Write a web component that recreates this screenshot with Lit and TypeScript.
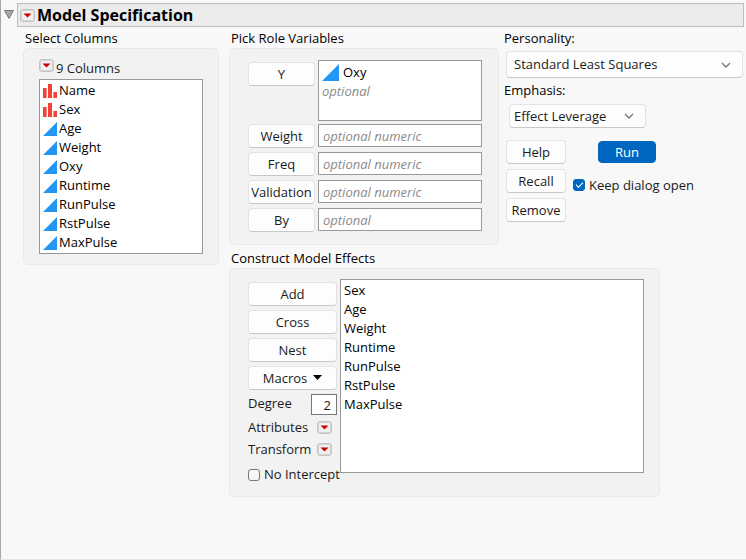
import { LitElement, html, css, svg } from "lit";
import { customElement, property } from "lit/decorators.js";

type Column = { name: string; kind: "nominal" | "continuous" };

const columns: Column[] = [
  { name: "Name", kind: "nominal" },
  { name: "Sex", kind: "nominal" },
  { name: "Age", kind: "continuous" },
  { name: "Weight", kind: "continuous" },
  { name: "Oxy", kind: "continuous" },
  { name: "Runtime", kind: "continuous" },
  { name: "RunPulse", kind: "continuous" },
  { name: "RstPulse", kind: "continuous" },
  { name: "MaxPulse", kind: "continuous" },
];

const roles = [
  { name: "Weight", hint: "optional numeric" },
  { name: "Freq", hint: "optional numeric" },
  { name: "Validation", hint: "optional numeric" },
  { name: "By", hint: "optional" },
];

const effects = ["Sex", "Age", "Weight", "Runtime", "RunPulse", "RstPulse", "MaxPulse"];

/* Modeling-type marker: red bars for nominal, blue ramp for continuous. */
@customElement("type-icon")
class TypeIcon extends LitElement {
  @property() kind: Column["kind"] = "continuous";

  static styles = css`
    :host { display: block; width: 14px; height: 14px; flex: none; }
    .glyph { display: block; width: 100%; height: 100%; }
  `;

  render() {
    const shape = this.kind === "nominal"
      ? svg`<g fill="#f44336"><rect x="0" y="4" width="3.6" height="10"/><rect x="5" y="0" width="4" height="14"/><rect x="10.4" y="8" width="3.6" height="6"/></g>`
      : svg`<path fill="#2196f3" d="M14 0V14H0Z"/>`;
    return html`<svg class="glyph" viewBox="0 0 14 14" aria-hidden="true">${shape}</svg>`;
  }
}

/* The red-triangle menu button. */
@customElement("hotspot-button")
class HotspotButton extends LitElement {
  @property() label = "";

  static styles = css`
    :host { display: block; width: 15px; height: 13px; flex: none; }
    .hotspot {
      display: flex; align-items: center; justify-content: center;
      box-sizing: border-box; width: 100%; height: 100%; padding: 0;
      border: 1px solid #c4c4c4; border-radius: 3px; background: #f0f0f0;
      box-shadow: inset 0 0 0 1px #d4d4d4;
    }
    .mark { display: block; width: 9px; height: 5px; }
  `;

  render() {
    return html`<button class="hotspot" aria-label=${this.label}>
      <svg class="mark" viewBox="0 0 9 5"><path fill="#cc0000" d="M0.5 0.5H8.5L4.5 4.5Z"/></svg>
    </button>`;
  }
}

@customElement("app-root")
class AppRoot extends LitElement {
  static styles = css`
    :host {
      display: block; box-sizing: border-box; min-height: 100vh;
      border-left: 1px solid #a8a8a8; border-bottom: 1px solid #e5e5e5;
      background: #f8f8f8; color: #1a1a1a;
      font: 13px/19px "Open Sans", "Noto Sans", sans-serif;
    }
    button, input, select { font: inherit; color: inherit; margin: 0; box-sizing: border-box; }
    h1, h2, ul { margin: 0; padding: 0; }
    ul { list-style: none; }

    .outline { display: flex; align-items: center; gap: 3px; padding: 3px 2px 0 3px; }
    .disclose { display: block; padding: 0; border: 0; background: none; width: 10px; height: 10px; flex: none; }
    .disclose svg { display: block; }
    .bar {
      flex: 1; display: flex; align-items: center; gap: 2px; box-sizing: border-box;
      height: 24px; padding: 0 2px; border: 1px solid #bdbdbd; background: #ebebeb;
    }
    h1 { font-size: 16px; line-height: 22px; font-weight: 700; color: #000; }
    h2 { font-size: 13px; line-height: 20px; font-weight: 400; padding-left: 2px; white-space: nowrap; color: #000; }

    .body {
      display: grid; grid-template-columns: max-content max-content minmax(0, 1fr);
      column-gap: 10px; row-gap: 3px; align-items: start; padding: 1px 3px 0 22px;
    }
    .select { grid-row: span 2; }
    .construct { grid-column: 2 / span 2; justify-self: start; }
    .panel { border: 1px solid #e9e9e9; border-radius: 5px; background: #f2f2f2; }

    .list { box-sizing: border-box; border: 1px solid #999; background: #fff; color: #000; }
    .columns { padding: 10px 15px; }
    .count { display: flex; gap: 2px; height: 20px; }
    .columns .list { width: 164px; padding: 1px 3px; }
    .columns li { display: flex; align-items: center; gap: 2px; }

    .push {
      height: 24px; padding: 0; border: 1px solid #e3e3e3; border-bottom-color: #c8c8c8;
      border-radius: 4px; background: #fdfdfd; line-height: 22px; text-align: center; white-space: nowrap;
    }
    .roles { display: grid; gap: 3px; padding: 11px 16px 13px 18px; }
    .optional { display: grid; gap: 5px; }
    .role { display: grid; grid-template-columns: 67px 164px; gap: 3px; align-items: start; height: 23px; }
    .role.y { height: 61px; }
    .role.y .push { margin-top: 2px; }
    .response { height: 61px; padding: 2px 3px; }
    .response li { display: flex; align-items: center; gap: 4px; }
    .response type-icon { width: 17px; height: 17px; }
    .hint { display: block; width: 100%; height: 19px; padding: 0; border: 0; outline: 0; background: none; }
    .field { width: 100%; height: 23px; padding: 0 4px; border: 1px solid #999; background: #fff; }
    ::placeholder { color: #8a8a8a; font-style: italic; opacity: 1; }

    .effects { display: flex; align-items: flex-start; gap: 3px; padding: 10px 15px 12px 18px; }
    .tools { display: flex; flex-direction: column; gap: 4px; width: 89px; padding-top: 3px; }
    .effects .list { width: 304px; padding: 1px 3px; min-height: 194px; }
    .caret { display: inline-block; width: 9px; height: 5px; margin-left: 6px; vertical-align: 3px; }
    .options { display: grid; padding-bottom: 1px; }
    .option { display: flex; justify-content: space-between; align-items: center; height: 22px; }
    .option:first-child { align-items: flex-start; }
    .option.menu { padding-right: 5px; }
    .degree { width: 26px; height: 21px; padding: 0 5px; border: 1px solid #777; background: #fff; text-align: right; }

    .check { display: flex; align-items: center; gap: 4px; white-space: nowrap; }
    .box {
      appearance: none; display: grid; place-items: center; flex: none;
      width: 12px; height: 12px; border: 1px solid #777; border-radius: 3px; background: #f7f7f7;
    }
    .box:checked { border-color: #0067c0; background: #0067c0; }
    .box:checked::before {
      content: ""; width: 7px; height: 4px; margin-bottom: 2px; rotate: -45deg;
      border: solid #fff; border-width: 0 0 1px 1px; box-sizing: border-box;
    }

    .side { display: flex; flex-direction: column; margin-left: -5px; }
    .label { line-height: 20px; color: #000; }
    .drop { display: grid; align-items: center; margin-left: 2px; }
    .drop > * { grid-area: 1 / 1; }
    .drop select {
      appearance: none; width: 100%; height: 27px; padding: 0 7px; border: 1px solid #e3e3e3;
      border-bottom-color: #c8c8c8; border-radius: 4px; background: #fdfdfd;
    }
    .drop svg { justify-self: end; margin-right: 12px; pointer-events: none; }
    .personality { margin-top: 3px; margin-bottom: 2px; }
    .emphasis { width: 137px; margin: 4px 0 12px 5px; }
    .emphasis select { height: 24px; padding: 0 4px; }
    .actions { display: grid; grid-template-columns: 60px max-content; gap: 5px 7px; margin-left: 2px; }
    .run { width: 58px; height: 22px; margin-left: 25px; padding: 0; border: 1px solid #0067c0; border-radius: 4px; background: #0067c0; color: #fff; line-height: 20px; align-self: center; }
    .keep { padding-top: 8px; height: 16px; }
  `;

  private chevron() {
    return html`<svg width="10" height="6" viewBox="0 0 10 6" aria-hidden="true">
      <path d="M1 1L5 5L9 1" fill="none" stroke="#777" stroke-width="1.3"/></svg>`;
  }

  render() {
    return html`
      <header class="outline">
        <button class="disclose" aria-label="Collapse">
          <svg width="10" height="10" viewBox="0 0 10 10"><path d="M0.5 0.5H9.5L5 8.5Z" fill="#a8a8a8" stroke="#777"/></svg>
        </button>
        <div class="bar">
          <hotspot-button label="Model Specification menu"></hotspot-button>
          <h1>Model Specification</h1>
        </div>
      </header>
      <main class="body">
        <section class="select">
          <h2>Select Columns</h2>
          <div class="panel columns">
            <div class="count">
              <hotspot-button label="Columns menu"></hotspot-button>
              <span>${columns.length} Columns</span>
            </div>
            <ul class="list">
              ${columns.map((c) => html`<li><type-icon kind=${c.kind}></type-icon>${c.name}</li>`)}
            </ul>
          </div>
        </section>

        <section>
          <h2>Pick Role Variables</h2>
          <div class="panel roles">
            <div class="role y">
              <button class="push">Y</button>
              <div class="list response">
                <ul><li><type-icon kind="continuous"></type-icon>Oxy</li></ul>
                <input class="hint" aria-label="Y" placeholder="optional">
              </div>
            </div>
            <div class="optional">
              ${roles.map((r) => html`<div class="role">
                <button class="push">${r.name}</button>
                <input class="field" aria-label=${r.name} placeholder=${r.hint}>
              </div>`)}
            </div>
          </div>
        </section>

        <section class="side">
          <label class="label" for="personality">Personality:</label>
          <div class="drop personality">
            <select id="personality"><option>Standard Least Squares</option></select>${this.chevron()}
          </div>
          <label class="label" for="emphasis">Emphasis:</label>
          <div class="drop emphasis">
            <select id="emphasis"><option>Effect Leverage</option></select>${this.chevron()}
          </div>
          <div class="actions">
            <button class="push">Help</button>
            <button class="run">Run</button>
            <button class="push">Recall</button>
            <label class="check keep"><input class="box" type="checkbox" checked>Keep dialog open</label>
            <button class="push">Remove</button>
          </div>
        </section>

        <section class="construct">
          <h2>Construct Model Effects</h2>
          <div class="panel effects">
            <div class="tools">
              <button class="push">Add</button>
              <button class="push">Cross</button>
              <button class="push">Nest</button>
              <button class="push">Macros<svg class="caret" viewBox="0 0 9 5"><path d="M0 0H9L4.5 5Z"/></svg></button>
              <div class="options">
                <div class="option"><label for="degree">Degree</label><input class="degree" id="degree" value="2"></div>
                <div class="option menu">Attributes<hotspot-button label="Attributes"></hotspot-button></div>
                <div class="option menu">Transform<hotspot-button label="Transform"></hotspot-button></div>
              </div>
              <label class="check"><input class="box" type="checkbox">No Intercept</label>
            </div>
            <ul class="list">${effects.map((e) => html`<li>${e}</li>`)}</ul>
          </div>
        </section>
      </main>
    `;
  }
}
